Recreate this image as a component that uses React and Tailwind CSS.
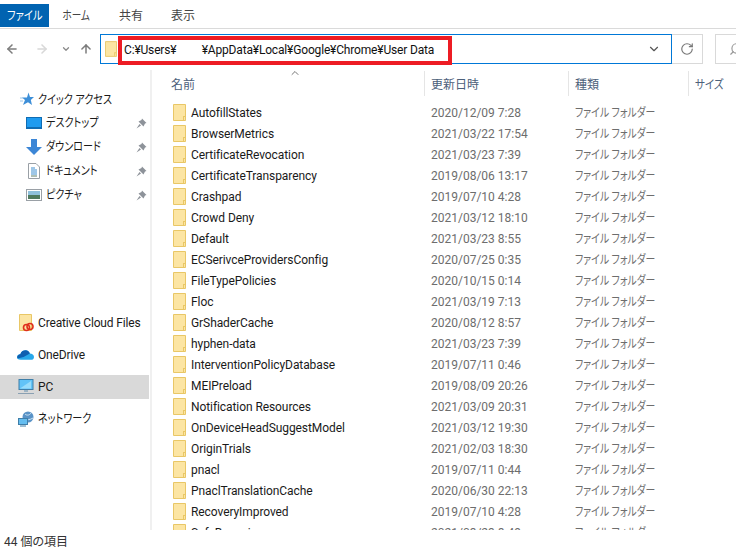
import { ArrowLeft, ArrowRight, ArrowUp, ChevronDown, ChevronUp, RotateCw, Search } from 'lucide-react';

const font = 'font-["Roboto","Noto_Sans_CJK_JP",sans-serif] [font-feature-settings:"palt"]';
// Yu Gothic UI のカナは細いので横方向だけ詰める
const kana = 'inline-block whitespace-nowrap origin-left scale-x-[.84]';

const files = [
  ['AutofillStates', '2020/12/09 7:28'],
  ['BrowserMetrics', '2021/03/22 17:54'],
  ['CertificateRevocation', '2021/03/23 7:39'],
  ['CertificateTransparency', '2019/08/06 13:17'],
  ['Crashpad', '2019/07/10 4:28'],
  ['Crowd Deny', '2021/03/12 18:10'],
  ['Default', '2021/03/23 8:55'],
  ['ECSerivceProvidersConfig', '2020/07/25 0:35'],
  ['FileTypePolicies', '2020/10/15 0:14'],
  ['Floc', '2021/03/19 7:13'],
  ['GrShaderCache', '2020/08/12 8:57'],
  ['hyphen-data', '2021/03/23 7:39'],
  ['InterventionPolicyDatabase', '2019/07/11 0:46'],
  ['MEIPreload', '2019/08/09 20:26'],
  ['Notification Resources', '2021/03/09 20:31'],
  ['OnDeviceHeadSuggestModel', '2021/03/12 19:30'],
  ['OriginTrials', '2021/02/03 18:30'],
  ['pnacl', '2019/07/11 0:44'],
  ['PnaclTranslationCache', '2020/06/30 22:13'],
  ['RecoveryImproved', '2019/07/10 4:28'],
  ['SafeBrowsing', '2021/03/23 8:49'],
];

const Folder = ({ className }) => (
  <svg viewBox="0 0 13 17" className={className}>
    <path d="M0.5 0.5H12.5V16.5H0.5Z" fill="#fce5a3" stroke="#e9c766" />
    <path d="M10 12H12V16H10Z" fill="#e9c766" />
    <path d="M11 13H12V16H11Z" fill="#fce5a3" />
  </svg>
);

const Pin = () => (
  <svg viewBox="0 0 11 11" className="w-[11px] h-[11px] shrink-0">
    <path d="M6 0.5L10.5 5L9 5.5L7.5 8.5L2.5 3.5L5.5 2Z M3.5 6L0.5 10.5L5 7.5Z" fill="#8d9299" />
  </svg>
);

const QuickRow = ({ icon, label }) => (
  <div className="flex items-center h-6 pl-[25px] pr-[3px]">
    <div className="w-[17px] h-4 flex items-center justify-center shrink-0">{icon}</div>
    <div className="ml-[4px] flex-1 text-[#1a1a1a]">
      <span className={kana}>{label}</span>
    </div>
    <Pin />
  </div>
);

const NavRow = ({ icon, label, active, latin }) => (
  <div className={`flex items-center h-6 pl-[17px] mr-px ${active ? 'bg-[#d9d9d9]' : ''}`}>
    <div className="w-[17px] h-4 flex items-center justify-center shrink-0">{icon}</div>
    <span className={`ml-[4px] text-[#1a1a1a] ${latin ? 'tracking-[-0.15px]' : kana}`}>{label}</span>
  </div>
);

const Monitor = () => (
  <svg viewBox="0 0 16 16" className="w-4 h-4">
    <rect x="1" y="0.5" width="14" height="10" fill="#62c3f7" stroke="#3f7ea8" />
    <path d="M2 9.5L13 2V9.5Z" fill="#98dcfb" />
    <path d="M6 11H10V13H6Z" fill="#9db4c4" />
    <path d="M0 14.5H16" stroke="#8aa0b2" />
  </svg>
);

const App = () => {
  return (
    <div className={`w-[736px] h-[548px] bg-white overflow-hidden flex flex-col text-[12px] ${font}`}>
      {/* リボンのタブ */}
      <div className="flex h-[29px] pt-1 border-b border-[#dadada] text-[#444] shrink-0">
        <div className="w-[49px] h-[23px] bg-[#0063b1] text-white flex items-center justify-center">
          <span className="inline-block scale-x-[.85]">ファイル</span>
        </div>
        <div className="w-[54px] flex items-center justify-center h-[23px]">
          <span className="inline-block scale-x-[.8]">ホーム</span>
        </div>
        <div className="w-[56px] flex items-center justify-center h-[23px]">共有</div>
        <div className="w-[48px] flex items-center justify-center h-[23px]">表示</div>
      </div>

      {/* ツールバー */}
      <div className="flex items-start h-[41px] pt-[5px] shrink-0">
        <div className="w-[100px] h-[30px] flex items-center pl-[5px] shrink-0">
          <ArrowLeft size={14} strokeWidth={2.6} className="text-[#7d7d7d]" />
          <ArrowRight size={14} strokeWidth={2.6} className="text-[#d8d8d8] ml-[16px]" />
          <ChevronDown size={10} strokeWidth={3} className="text-[#8a8a8a] ml-[12px]" />
          <ArrowUp size={14} strokeWidth={2.6} className="text-[#7d7d7d] ml-[8px]" />
        </div>
        <div className="relative w-[572px] h-[30px] border border-[#0078d7] flex items-center pl-[4px] shrink-0">
          <Folder className="w-3 h-4" />
          <span className="ml-[7px] mt-px text-[#111] whitespace-pre tracking-[-0.17px]">C:¥Users¥         ¥AppData¥Local¥Google¥Chrome¥User Data</span>
          <ChevronDown size={14} className="absolute right-[10px] top-[7px] text-[#555]" />
          <div className="absolute left-[17px] top-[1px] w-[334px] h-[29px] border-[4px] border-[#ed1c24]" />
        </div>
        <div className="w-[31px] h-[30px] border border-[#d9d9d9] border-l-0 flex items-center justify-center shrink-0">
          <RotateCw size={14} className="text-[#777]" />
        </div>
        <div className="ml-[12px] flex-1 h-[30px] border border-[#d9d9d9] border-r-0 flex items-center pl-[13px] overflow-hidden">
          <Search size={14} className="text-[#999] -scale-x-100 shrink-0" />
        </div>
      </div>

      <div className="flex flex-1 min-h-0">
        {/* ナビゲーション */}
        <div className="w-[152px] h-[460px] border-r-2 border-[#f0f0f0] shrink-0 pt-[17px]">
          <div className="flex items-center h-6 pl-[20px] text-[#1a1a1a]">
            <svg viewBox="0 0 14 14" className="w-[14px] h-[14px] shrink-0">
              <path d="M8.5 0.5L10 5H14L10.8 8L12 13L8 10.3L3 13L5 8L2 5.5H7Z" fill="#3d8fd8" />
              <path d="M0 6H3M0 9H3" stroke="#9cc6ea" />
            </svg>
            <span className={`ml-[4px] mt-px ${kana}`}>クイック アクセス</span>
          </div>
          <QuickRow
            label="デスクトップ"
            icon={
              <svg viewBox="0 0 16 12" className="w-4 h-3">
                <rect x="0.5" y="0.5" width="15" height="11" fill="#1e9bf0" stroke="#0f6cb3" />
                <path d="M1 10.5H15" stroke="#0f6cb3" />
              </svg>
            }
          />
          <QuickRow
            label="ダウンロード"
            icon={
              <svg viewBox="0 0 16 16" className="w-4 h-4">
                <path d="M5 0H11V8H16L8 16L0 8H5Z" fill="#3c86d6" />
              </svg>
            }
          />
          <QuickRow
            label="ドキュメント"
            icon={
              <svg viewBox="0 0 12 16" className="w-3 h-4">
                <path d="M0.5 0.5H8L11.5 4V15.5H0.5Z" fill="#fff" stroke="#9aa0a6" />
                <path d="M3 5H7M3 7H9M3 9H9M3 11H9" stroke="#3f8fd0" />
                <path d="M3 13H9" stroke="#5f7f6a" />
              </svg>
            }
          />
          <QuickRow
            label="ピクチャ"
            icon={
              <svg viewBox="0 0 16 12" className="w-4 h-3">
                <rect x="0.5" y="0.5" width="15" height="11" fill="#fff" stroke="#9aa0a6" />
                <rect x="2" y="2" width="12" height="4" fill="#8fc1dc" />
                <rect x="2" y="6" width="12" height="4" fill="#4f7a5e" />
              </svg>
            }
          />

          <div className="mt-[104px]">
            <NavRow
              latin
              label="Creative Cloud Files"
              icon={
                <svg viewBox="0 0 17 18" className="w-[17px] h-[18px]">
                  <path d="M2.5 0.5H14.5V16.5H2.5Z" fill="#fce5a3" stroke="#e9c766" />
                  <circle cx="9.5" cy="13.5" r="3" fill="none" stroke="#e0301e" strokeWidth="1.6" />
                  <circle cx="13" cy="12.5" r="3" fill="none" stroke="#e0301e" strokeWidth="1.6" />
                </svg>
              }
            />
            <div className="h-2" />
            <NavRow
              latin
              label="OneDrive"
              icon={
                <svg viewBox="0 0 18 12" className="w-[17px] h-3">
                  <path d="M4 11C1 11 0 9.5 0 8C0 6 2 5 3.5 5.2C4.5 2 7 1 9 1C11.5 1 13 2.5 13.6 4.5C16 4.5 18 6 18 8C18 10 16.5 11 15 11Z" fill="#28a8ea" />
                  <path d="M0.7 9.8C0 8.5 0 6 3.5 5.2C4.5 2 7 1 9 1C11.5 1 13 2.5 13.6 4.5L7 8Z" fill="#0f5fb0" />
                </svg>
              }
            />
            <div className="h-2" />
            <NavRow latin label="PC" active icon={<Monitor />} />
            <div className="h-2" />
            <NavRow
              label="ネットワーク"
              icon={
                <svg viewBox="0 0 16 16" className="w-4 h-4">
                  <circle cx="10" cy="6" r="5.5" fill="#5a93c7" />
                  <path d="M7 3C9 5 12 4 13 2M6 8C9 9 12 9 15 7" stroke="#cfe6f5" fill="none" />
                  <rect x="0.5" y="7.5" width="9" height="6" fill="#64bdf0" stroke="#3f7ea8" />
                  <path d="M2 15H8" stroke="#3f7ea8" />
                </svg>
              }
            />
          </div>
        </div>

        {/* ファイル一覧 */}
        <div className="flex-1 min-w-0 h-[460px] flex flex-col">
          <div className="relative flex h-[25px] mt-px text-[#4c607a] shrink-0">
            <ChevronUp size={12} className="absolute left-[137px] -top-[4px] text-[#777]" />
            <div className="w-[273px] pl-[19px] pt-[2px] flex items-center border-r border-[#e5e5e5]">名前</div>
            <div className="w-[144px] pl-[6px] pt-[2px] flex items-center border-r border-[#e5e5e5]">更新日時</div>
            <div className="w-[120px] pl-[6px] pt-[2px] flex items-center border-r border-[#e5e5e5]">種類</div>
            <div className="flex-1 pl-[6px] pt-[2px] flex items-center whitespace-nowrap">
              <span className="inline-block origin-left scale-x-[.88]">サイズ</span>
            </div>
          </div>
          <div className="pt-[6px] flex-1 min-h-0 overflow-hidden">
            {files.map(([name, date]) => (
              <div key={name} className="flex items-center h-[21px]">
                <div className="w-[21px] shrink-0" />
                <Folder className="w-[13px] h-[17px] shrink-0" />
                <span className="ml-[5px] w-[240px] text-[#1a1a1a] whitespace-nowrap tracking-[-0.08px]">{name}</span>
                <span className="w-[144px] text-[#6d6d6d]">{date}</span>
                <span className="text-[#6d6d6d] inline-block whitespace-nowrap origin-left scale-x-[.82]">ファイル フォルダー</span>
              </div>
            ))}
          </div>
        </div>
      </div>

      {/* ステータスバー */}
      <div className="h-[18px] pl-[4px] pt-[6px] flex items-center text-[#333] shrink-0">44 個の項目</div>
    </div>
  );
};

export default App;
